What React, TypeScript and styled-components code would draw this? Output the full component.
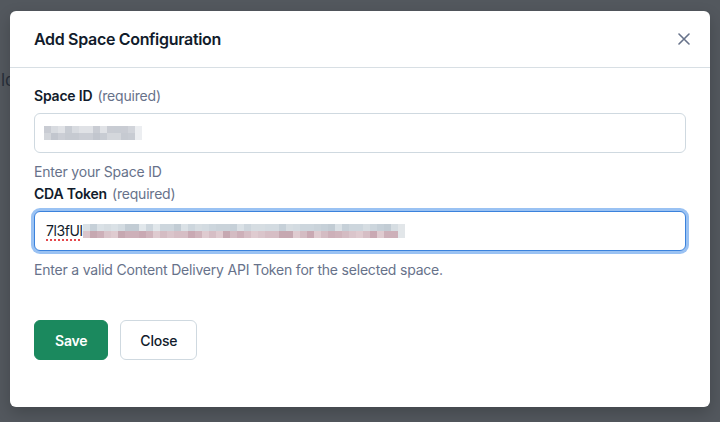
import React from "react";
import styled, { createGlobalStyle } from "styled-components";

const GlobalStyle = createGlobalStyle`
  html, body { margin: 0; padding: 0; }
  body {
    font-family: Inter, "Noto Sans", "Liberation Sans", sans-serif;
    -webkit-font-smoothing: antialiased;
  }
  * { box-sizing: border-box; }
`;

const Screen = styled.div`
  position: relative;
  width: 720px;
  height: 422px;
  overflow: hidden;
  background: #ffffff;
`;

const Page = styled.div`
  padding: 71px 0 0 1px;
  font-size: 17px;
  line-height: 18px;
  color: #6b7488;
`;

const Overlay = styled.div`
  position: absolute;
  inset: 0;
  background: rgba(12, 20, 28, 0.71);
  display: flex;
  align-items: flex-start;
  padding: 11px 10px 15px;
`;

const Modal = styled.div`
  width: 700px;
  height: 396px;
  background: #ffffff;
  border-radius: 6px;
  box-shadow: 0 6px 16px rgba(0, 0, 0, 0.2);
  display: flex;
  flex-direction: column;
`;

const Header = styled.header`
  height: 57px;
  flex: none;
  display: flex;
  align-items: center;
  justify-content: space-between;
  padding: 0 10px 0 24px;
  border-bottom: 1px solid #d8dfe4;
`;

const Title = styled.h2`
  margin: 0;
  font-size: 16px;
  line-height: 24px;
  font-weight: 600;
  color: #111b2b;
  letter-spacing: -0.32px;
`;

const CloseIconButton = styled.button`
  width: 32px;
  height: 32px;
  border: none;
  background: transparent;
  padding: 0;
  display: flex;
  align-items: center;
  justify-content: center;
  color: #67728a;
  cursor: pointer;
`;

const Body = styled.div`
  flex: 1;
  display: flex;
  flex-direction: column;
  padding: 18px 24px 0;
  letter-spacing: -0.2px;
`;

const Label = styled.label<{ $gap?: number }>`
  display: block;
  margin-top: ${(p) => p.$gap ?? 0}px;
  margin-bottom: 7px;
  font-size: 14px;
  line-height: 20px;
  font-weight: 600;
  color: #111b2b;
`;

const Hint = styled.span`
  margin-left: 5px;
  font-weight: 400;
  color: #67728a;
`;

const InputBox = styled.div<{ $focused?: boolean }>`
  height: 40px;
  display: flex;
  align-items: center;
  padding: 0 11px;
  border-radius: 6px;
  border: 1px solid ${(p) => (p.$focused ? "#3b82dc" : "#cfd9e0")};
  box-shadow: ${(p) => (p.$focused ? "0 0 0 3px #9ac2f3" : "none")};
  font-size: 14px;
  color: #111b2b;
  background: #ffffff;
`;

const TypedText = styled.span`
  line-height: 20px;
  letter-spacing: -0.4px;
  text-decoration: underline dotted #e5484d;
  text-decoration-thickness: 2px;
  text-underline-offset: 3px;
`;

const HelpText = styled.p`
  margin: 9px 0 0;
  font-size: 14px;
  line-height: 20px;
  color: #67728a;
`;

const Footer = styled.div`
  display: flex;
  gap: 12px;
  margin-top: 40px;
`;

const Button = styled.button<{ $primary?: boolean }>`
  height: 40px;
  padding: 0 ${(p) => (p.$primary ? 20 : 19)}px;
  border-radius: 6px;
  font-family: inherit;
  font-size: 14px;
  letter-spacing: -0.2px;
  font-weight: ${(p) => (p.$primary ? 600 : 500)};
  cursor: pointer;
  border: 1px solid ${(p) => (p.$primary ? "#1b895e" : "#cfd9e0")};
  background: ${(p) => (p.$primary ? "#1b895e" : "#ffffff")};
  color: ${(p) => (p.$primary ? "#ffffff" : "#111b2b")};
`;

type MosaicProps = {
  cells: number;
  cell: number;
  rowH: number;
  top: string[];
  bottom: string[];
  edge: string;
  seed: number;
  offset?: number;
};

function pick(list: string[], i: number, seed: number) {
  let h = (i + 1) * 2654435761 + seed * 97531;
  h = (h ^ (h >>> 13)) >>> 0;
  h = Math.imul(h, 1274126177) >>> 0;
  h = (h ^ (h >>> 16)) >>> 0;
  return list[h % list.length];
}

const Mosaic: React.FC<MosaicProps> = ({ cells, cell, rowH, top, bottom, edge, seed, offset = 0 }) => {
  const rects: React.ReactNode[] = [];
  for (let i = 0; i < cells; i++) {
    const last = i === cells - 1;
    const t = last ? edge : pick(top, i, seed);
    const b = last ? edge : pick(bottom, i, seed + 7);
    rects.push(<rect key={`t${i}`} x={i * cell} y={0} width={cell} height={rowH} fill={t} />);
    rects.push(<rect key={`b${i}`} x={i * cell} y={rowH} width={cell} height={rowH} fill={b} />);
  }
  return (
    <svg
      width={cells * cell}
      height={rowH * 2}
      style={{ marginLeft: offset, display: "block" }}
      aria-hidden="true"
    >
      {rects}
    </svg>
  );
};

const spaceTop = ["#dcdfe3", "#c9ccd3", "#d1d4da", "#d8dbe0", "#c8ccd3", "#e0e2e6", "#cdd0d6"];
const spaceBottom = ["#d4d7dc", "#c6cad1", "#cbced5", "#d9dce1", "#c8ccd3", "#d3d6db", "#c2c6ce"];
const tokenTop = ["#cdd6dd", "#d3dbe1", "#c6d0d8", "#dae1e6", "#c2ccd4", "#d6dde2", "#e1e7eb", "#cad3da"];
const tokenBottom = ["#d4bcc3", "#cdb0b9", "#dac5cb", "#c9a9b3", "#dfcbd0", "#c6a8b1", "#d6bec5", "#d0b4bc"];

const XIcon = () => (
  <svg width="12" height="12" viewBox="0 0 12 12" aria-hidden="true">
    <path d="M1 1 L11 11 M11 1 L1 11" stroke="currentColor" strokeWidth="1.6" strokeLinecap="round" />
  </svg>
);

export default function App() {
  return (
    <>
      <GlobalStyle />
      <Screen>
        <Page>ld</Page>
        <Overlay>
          <Modal role="dialog" aria-label="Add Space Configuration">
            <Header>
              <Title>Add Space Configuration</Title>
              <CloseIconButton aria-label="Close">
                <XIcon />
              </CloseIconButton>
            </Header>
            <Body>
              <Label>
                Space ID<Hint>(required)</Hint>
              </Label>
              <InputBox>
                <Mosaic
                  cells={14}
                  cell={7}
                  rowH={7}
                  top={spaceTop}
                  bottom={spaceBottom}
                  edge="#eceef1"
                  seed={3}
                  offset={-2}
                />
              </InputBox>
              <HelpText>Enter your Space ID</HelpText>
              <Label $gap={2}>
                CDA Token<Hint>(required)</Hint>
              </Label>
              <InputBox $focused>
                <TypedText>7l3fUl</TypedText>
                <Mosaic
                  cells={46}
                  cell={7}
                  rowH={7}
                  top={tokenTop}
                  bottom={tokenBottom}
                  edge="#e2e6e9"
                  seed={11}
                />
              </InputBox>
              <HelpText>Enter a valid Content Delivery API Token for the selected space.</HelpText>
              <Footer>
                <Button $primary>Save</Button>
                <Button>Close</Button>
              </Footer>
            </Body>
          </Modal>
        </Overlay>
      </Screen>
    </>
  );
}
